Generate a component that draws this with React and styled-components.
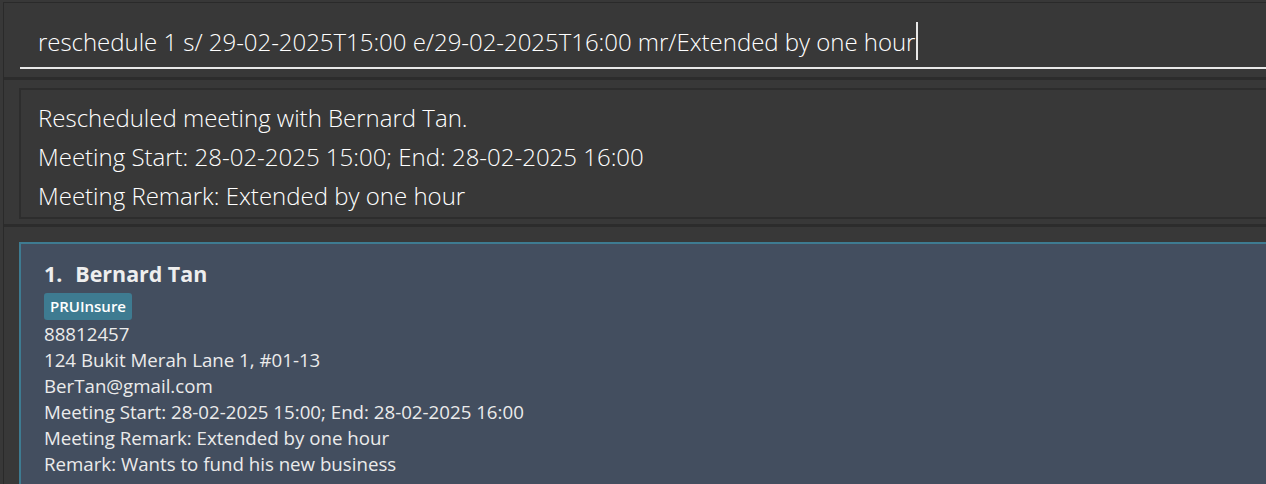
import React from 'react';
import styled, { createGlobalStyle } from 'styled-components';

const GlobalStyle = createGlobalStyle`
  html, body {
    margin: 0;
    padding: 0;
    background: #383838;
    overflow: hidden;
  }
`;

const Window = styled.div`
  height: 481px;
  margin: 2px 0 0 3px;
  border-top: 1px solid #2a2a2a;
  border-left: 1px solid #2a2a2a;
  background: #383838;
  font-family: "Open Sans", "Noto Sans", sans-serif;
  overflow: hidden;
`;

const CommandPane = styled.div`
  height: 74px;
  padding: 0 0 0 16px;
  display: flex;
  flex-direction: column;
  justify-content: flex-end;
  border-bottom: 3px solid #2c2c2c;
`;

const CommandInput = styled.div`
  height: 48px;
  margin-bottom: 8px;
  padding: 0 0 6px 18px;
  box-sizing: border-box;
  border-bottom: 2px solid #e8e8e8;
  display: flex;
  align-items: center;
  color: #ffffff;
  font-size: 24px;
  font-weight: 300;
  letter-spacing: -0.03px;
  white-space: nowrap;
`;

const Caret = styled.span`
  display: inline-block;
  width: 2px;
  height: 38px;
  background: #e8e8e8;
  margin-left: 1px;
`;

const ResultPane = styled.div`
  height: 147px;
  padding: 8px 0 0 15px;
  border-bottom: 3px solid #2c2c2c;
  box-sizing: border-box;
`;

const ResultBox = styled.div`
  height: 131px;
  box-sizing: border-box;
  border: 2px solid #2d2d2d;
  border-right: none;
  padding: 8px 0 0 17px;
  color: #ffffff;
  font-size: 24px;
  font-weight: 300;
  line-height: 39px;
`;

const ListPane = styled.div`
  padding: 15px 0 0 15px;
`;

const Card = styled.div`
  background: #434e5f;
  border: 2px solid #3e7b91;
  border-right: none;
  padding: 16px 0 0 23px;
  height: 260px;
  color: #ebebeb;
`;

const Name = styled.div`
  font-size: 21.4px;
  font-weight: 700;
  line-height: 28px;
  color: #eeeeee;
`;

const Index = styled.span`
  margin-right: 13px;
`;

const Tags = styled.div`
  display: flex;
  gap: 6px;
  margin: 5px 0 1px;
`;

const Tag = styled.span`
  background: #3e7b91;
  color: #ffffff;
  font-size: 15px;
  font-weight: 600;
  padding: 2px 6px;
  border-radius: 3px;
  line-height: 23px;
`;

const Detail = styled.div`
  font-size: 18.7px;
  line-height: 26px;
`;

export default function App() {
  return (
    <>
      <GlobalStyle />
      <Window>
        <CommandPane>
          <CommandInput>
            reschedule 1 s/ 29-02-2025T15:00 e/29-02-2025T16:00 mr/Extended by one hour
            <Caret />
          </CommandInput>
        </CommandPane>
        <ResultPane>
          <ResultBox>
            <div>Rescheduled meeting with Bernard Tan.</div>
            <div>Meeting Start: 28-02-2025 15:00; End: 28-02-2025 16:00</div>
            <div>Meeting Remark: Extended by one hour</div>
          </ResultBox>
        </ResultPane>
        <ListPane>
          <Card>
            <Name><Index>1.</Index>Bernard Tan</Name>
            <Tags><Tag>PRUInsure</Tag></Tags>
            <Detail>88812457</Detail>
            <Detail>124 Bukit Merah Lane 1, #01-13</Detail>
            <Detail>BerTan@gmail.com</Detail>
            <Detail>Meeting Start: 28-02-2025 15:00; End: 28-02-2025 16:00</Detail>
            <Detail>Meeting Remark: Extended by one hour</Detail>
            <Detail>Remark: Wants to fund his new business</Detail>
          </Card>
        </ListPane>
      </Window>
    </>
  );
}
